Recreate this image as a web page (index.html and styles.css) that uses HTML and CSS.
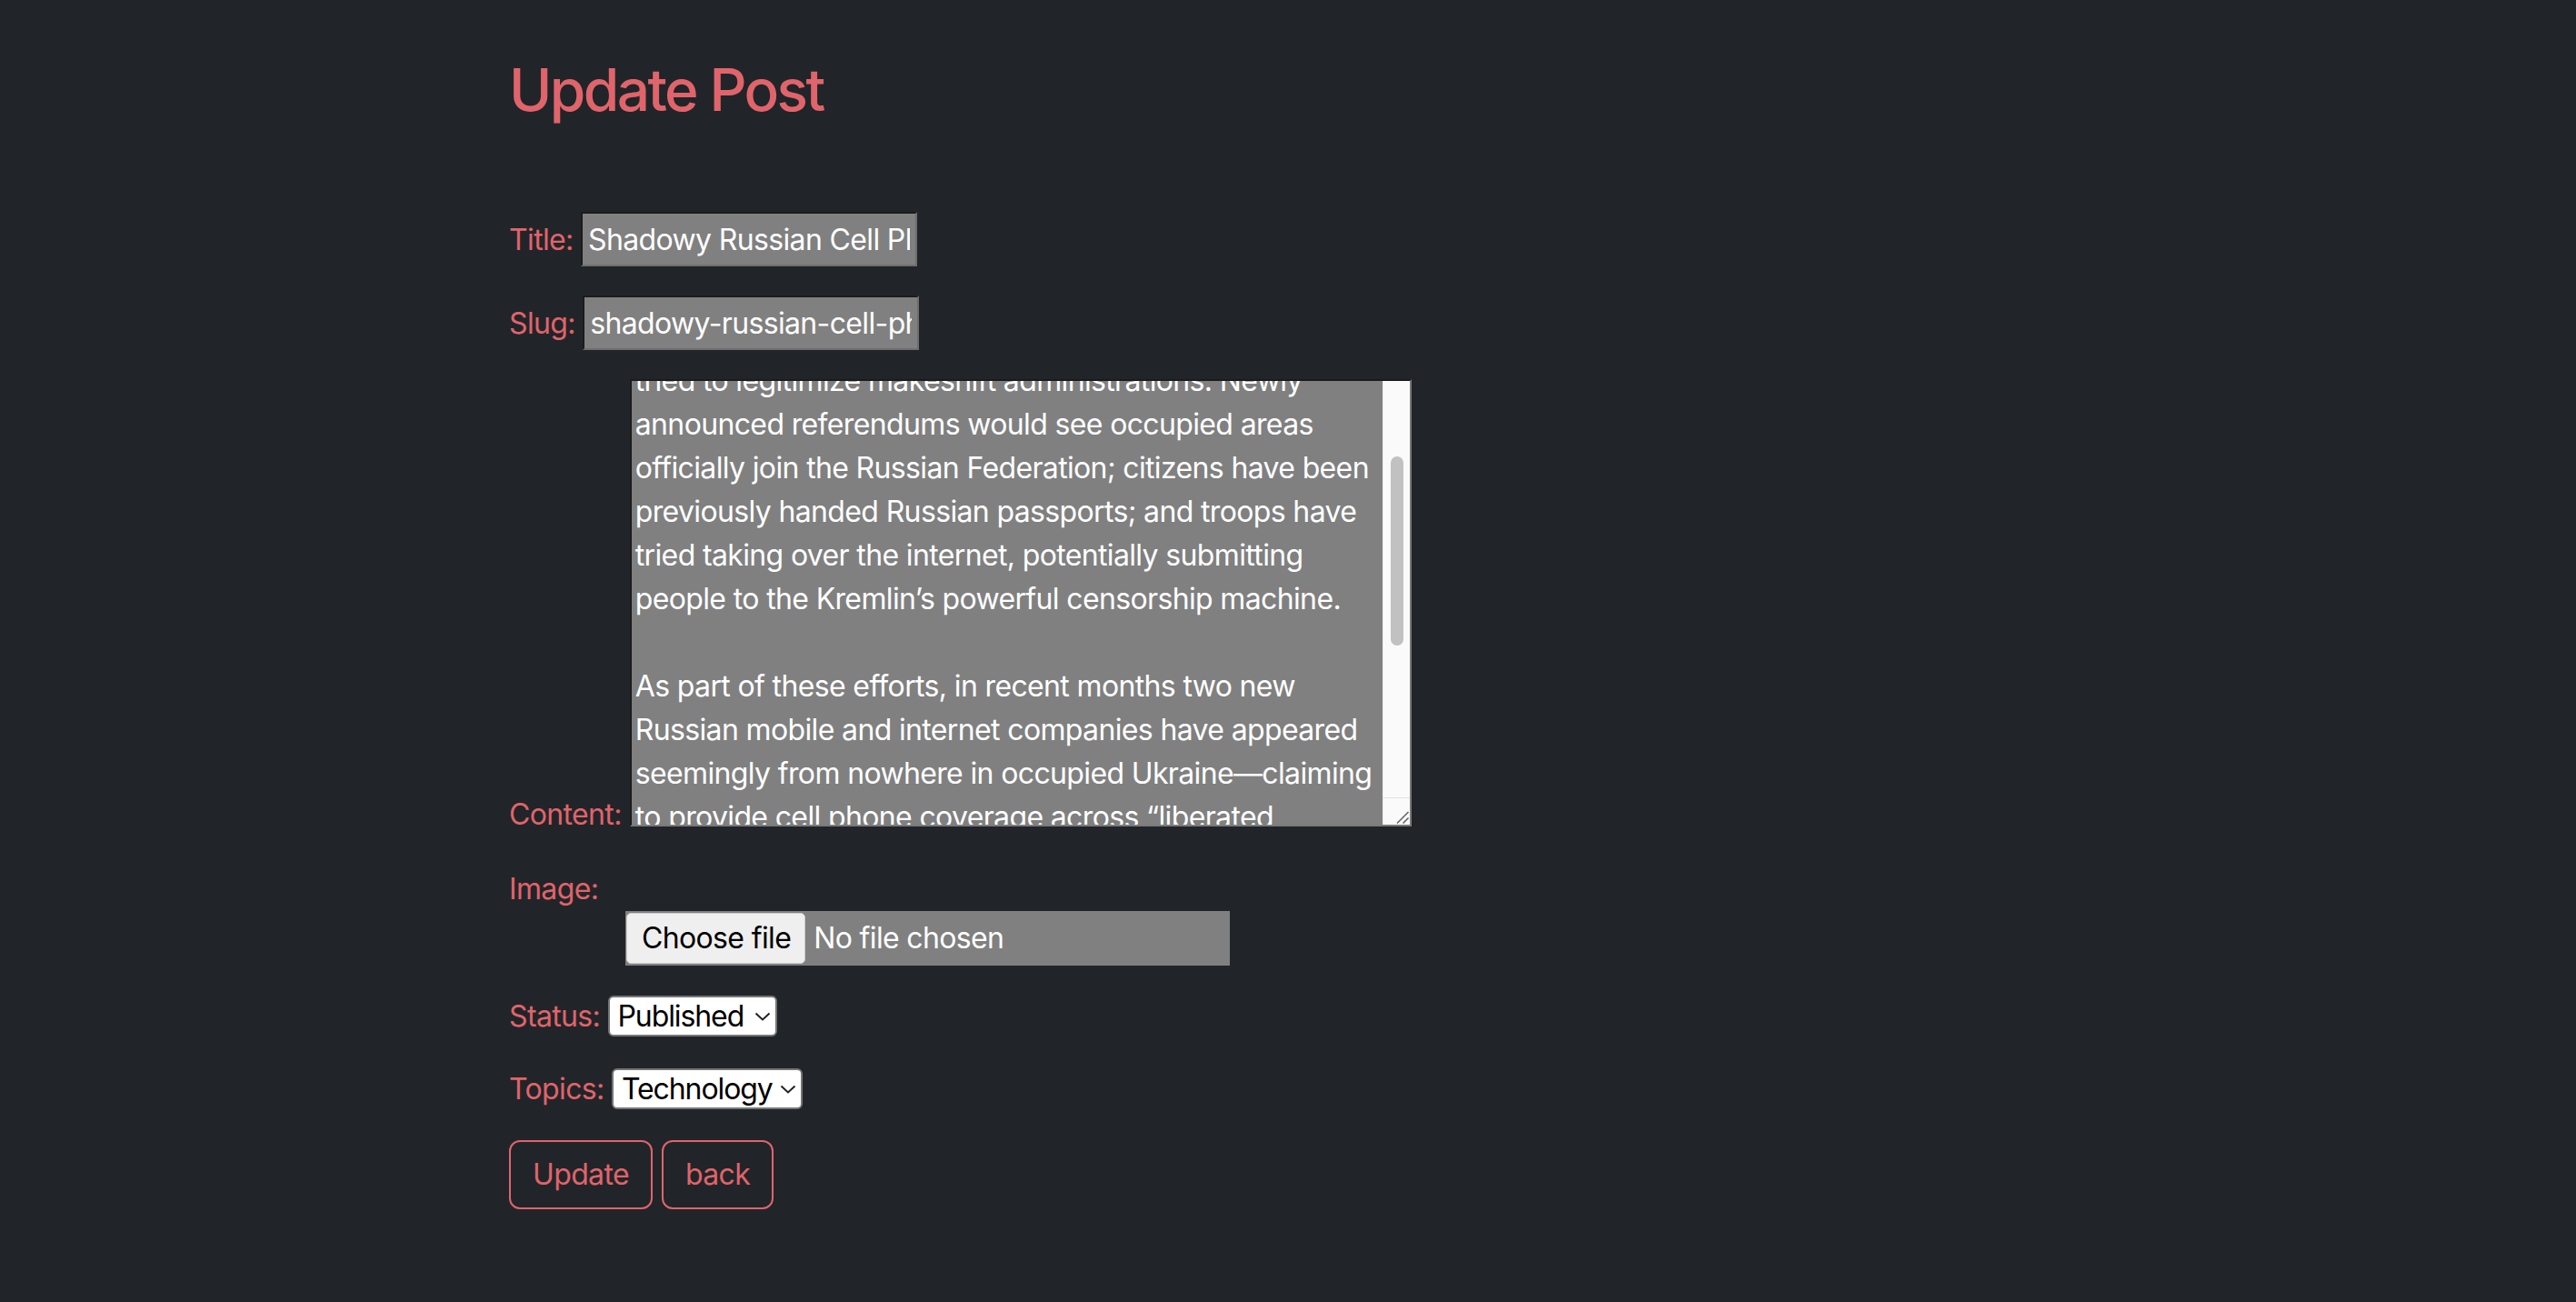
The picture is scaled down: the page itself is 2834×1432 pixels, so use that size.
FILE: index.html
```html
<!DOCTYPE html>
<html lang="en">
<head>
<meta charset="utf-8">
<title>Update Post</title>
<link rel="stylesheet" href="styles.css">
</head>
<body>
<main class="page">
  <h1 class="page-title">Update Post</h1>
  <form class="post-form">
    <p class="row"><label for="title">Title:</label> <input type="text" id="title" class="text-input" value="Shadowy Russian Cell Phone Companies Are Popping Up in Ukraine"></p>
    <p class="row"><label for="slug">Slug:</label> <input type="text" id="slug" class="text-input" value="shadowy-russian-cell-phone-companies-are-popping-up-in-ukraine"></p>
    <div class="row row-content">
      <label for="content" class="content-label">Content:</label>
      <div class="textarea-box">
        <textarea id="content" class="content-area">Since Russian troops invaded Ukraine in February,
Kremlin forces have seized large parts of the
country's south and east. In the regions they
now hold, Russian officials have
tried to legitimize makeshift administrations. Newly announced referendums would see occupied areas officially join the Russian Federation; citizens have been previously handed Russian passports; and troops have tried taking over the internet, potentially submitting people to the Kremlin’s powerful censorship machine.

As part of these efforts, in recent months two new Russian mobile and internet companies have appeared seemingly from nowhere in occupied Ukraine—claiming to provide cell phone coverage across “liberated territories.” The companies route people's data through Russian infrastructure, putting it within reach of the country's surveillance systems.

Researchers say the new operators are part of a wider push to cut off occupied areas from the rest of Ukraine.</textarea>
        <div class="scrollbar" aria-hidden="true">
          <div class="scroll-track"><div class="scroll-thumb"></div></div>
          <div class="scroll-corner">
            <svg class="grip" viewBox="0 0 29 29" width="29" height="29"><path d="M15 27.5 L27.5 15 M21.5 27.5 L27.5 21.5" stroke="#666" stroke-width="1.6" fill="none"/></svg>
          </div>
        </div>
      </div>
    </div>
    <div class="row">
      <label for="image" class="block-label">Image:</label>
      <label class="file-field">
        <input type="file" id="image" class="file-native">
        <span class="file-btn">Choose file</span>
        <span class="file-name">No file chosen</span>
      </label>
    </div>
    <p class="row"><label for="status">Status:</label> <span class="select-wrap select-status"><select id="status" class="select"><option>Published</option><option>Draft</option></select><svg class="chevron" viewBox="0 0 18 10" width="18" height="10"><path d="M1.5 1.5 L9 8.5 L16.5 1.5" fill="none" stroke="#222" stroke-width="2"/></svg></span></p>
    <p class="row"><label for="topics">Topics:</label> <span class="select-wrap select-topics"><select id="topics" class="select"><option>Technology</option><option>Politics</option></select><svg class="chevron" viewBox="0 0 18 10" width="18" height="10"><path d="M1.5 1.5 L9 8.5 L16.5 1.5" fill="none" stroke="#222" stroke-width="2"/></svg></span></p>
    <div class="actions">
      <button type="submit" class="btn">Update</button>
      <a href="#" class="btn">back</a>
    </div>
  </form>
</main>
<script src="script.js"></script>
</body>
</html>
```
FILE: styles.css
```css
html, body {
  margin: 0;
  padding: 0;
  background: #212529;
}
body {
  font-family: Inter, "Liberation Sans", sans-serif;
  font-size: 32px;
  line-height: 48px;
  letter-spacing: -0.64px;
  color: #e0646b;
}
.page {
  max-width: 1714px;
  margin: 0 auto;
  padding-top: 60px;
}
.page-title {
  margin: 0 0 96px;
  font-size: 64px;
  line-height: 77px;
  font-weight: 500;
  letter-spacing: -2.6px;
  color: #e0646b;
}
.post-form {
  margin: 0;
}
.row {
  margin: 0 0 32px;
}
.row label {
  color: #e0646b;
}
.block-label {
  display: block;
}
.text-input {
  box-sizing: border-box;
  width: 370px;
  height: 60px;
  padding: 0 6px;
  font: inherit;
  letter-spacing: inherit;
  line-height: normal;
  color: #fff;
  background: #808080;
  border-width: 2px;
  border-style: solid;
  border-color: #1b1b1b #6e6e6e #6e6e6e #1b1b1b;
  outline: none;
}

/* content textarea with drawn scrollbar */
.row-content {
  display: flex;
  align-items: flex-end;
  gap: 9px;
  margin-bottom: 45px;
}
.content-label {
  line-height: 26px;
}
.textarea-box {
  box-sizing: border-box;
  display: flex;
  width: 860px;
  height: 492px;
  background: #808080;
  border-width: 2px;
  border-style: solid;
  border-color: #1b1b1b #7a7a7a #7a7a7a #1b1b1b;
}
.content-area {
  flex: 1;
  min-width: 0;
  margin: 0;
  padding: 2px 4px;
  font: inherit;
  letter-spacing: inherit;
  line-height: 48px;
  color: #fff;
  background: transparent;
  border: none;
  outline: none;
  resize: none;
  overflow: hidden;
}
.scrollbar {
  display: flex;
  flex-direction: column;
  width: 30px;
  flex: none;
}
.scroll-track {
  flex: 1;
  box-sizing: border-box;
  padding: 83px 7px 0 8px;
  background: #fafafa;
  border-left: 1px solid #ececec;
}
.scroll-thumb {
  height: 208px;
  background: #c1c1c1;
  border-radius: 8px;
}
.scroll-corner {
  box-sizing: border-box;
  height: 30px;
  background: #fafafa;
  border-top: 1px solid #e2e2e2;
  border-left: 1px solid #ececec;
}
.grip {
  display: block;
}

/* file field */
.file-native {
  display: none;
}
.file-field {
  display: inline-flex;
  align-items: center;
  box-sizing: border-box;
  width: 665px;
  height: 60px;
  margin-left: 128px;
  padding-left: 1px;
  background: #808080;
  cursor: pointer;
}
.row .file-field {
  color: #fff;
}
.file-btn {
  box-sizing: border-box;
  height: 56px;
  padding: 0 15px 0 16px;
  line-height: 54px;
  color: #000;
  background: #efefef;
  border: 1px solid #cdcdcd;
  border-radius: 5px;
}
.file-name {
  margin-left: 9px;
  color: #fff;
}

/* selects */
.select-wrap {
  position: relative;
  display: inline-block;
}
.select {
  -webkit-appearance: none;
  appearance: none;
  box-sizing: border-box;
  height: 45px;
  padding: 0 28px 0 9px;
  font: inherit;
  letter-spacing: -1.1px;
  line-height: normal;
  color: #000;
  background: #fff;
  border: 2px solid #767676;
  border-radius: 6px;
  outline: none;
}
.select-status .select {
  width: 186px;
}
.select-topics .select {
  width: 210px;
}
.chevron {
  position: absolute;
  right: 7px;
  top: 50%;
  margin-top: -5px;
  pointer-events: none;
}

/* buttons */
.actions {
  display: flex;
  gap: 10px;
}
.btn {
  display: inline-block;
  box-sizing: border-box;
  height: 76px;
  padding: 12px 24px;
  font: inherit;
  letter-spacing: inherit;
  line-height: 48px;
  color: #e0646b;
  background: transparent;
  border: 2px solid #e0646b;
  border-radius: 12px;
  text-decoration: none;
  cursor: pointer;
}
```
FILE: script.js
```js
document.getElementById('content').scrollTop = 218;
```
